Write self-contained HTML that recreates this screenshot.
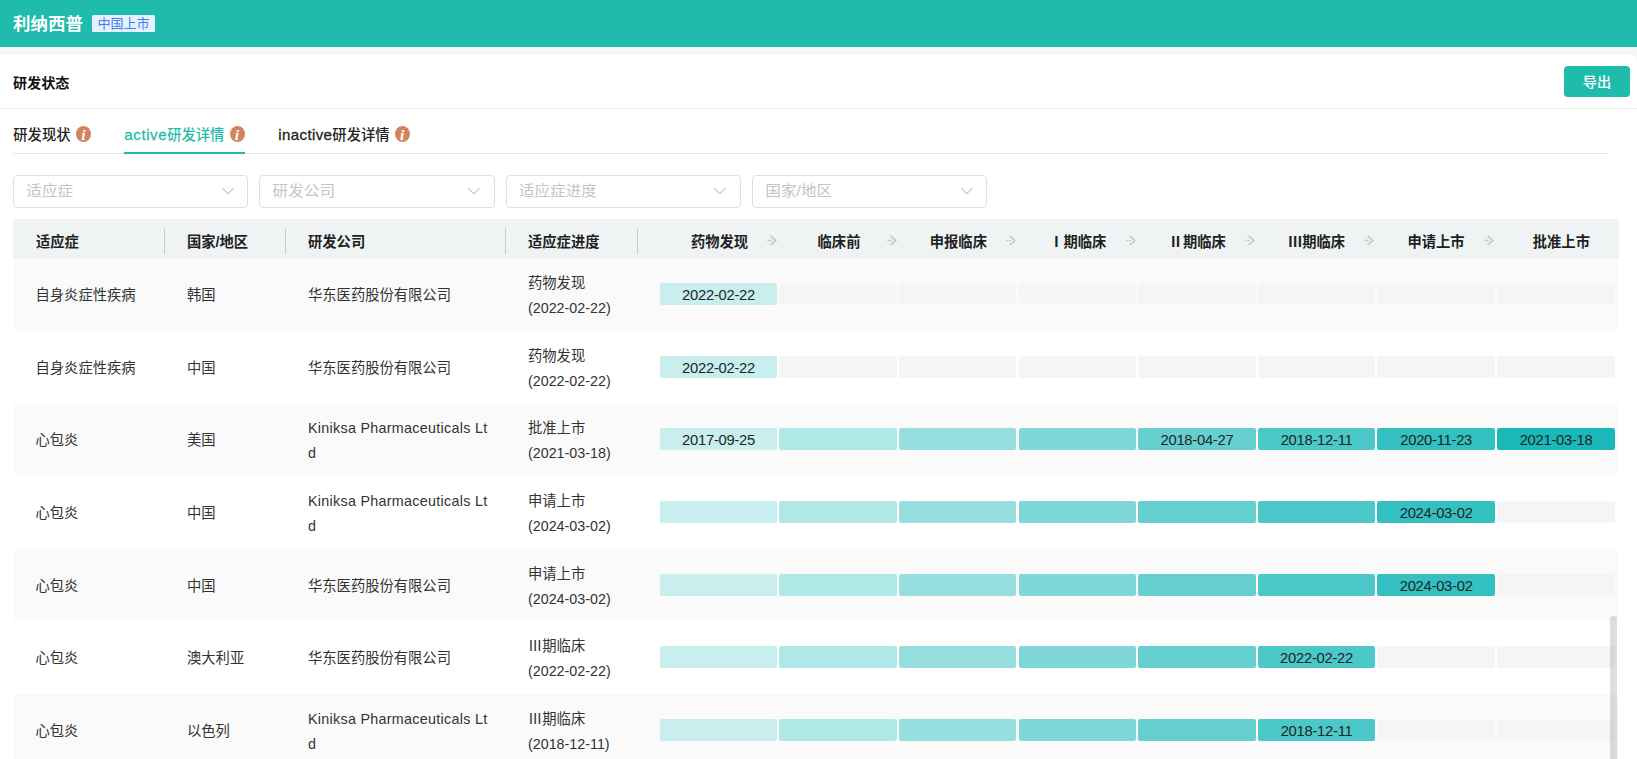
<!DOCTYPE html>
<html lang="zh-CN">
<head>
<meta charset="utf-8">
<title>利纳西普 - 研发状态</title>
<style>
html,body{margin:0;padding:0;}
body{width:1637px;height:759px;overflow:hidden;background:#f6f6f9;position:relative;
  font-family:"Liberation Sans","Noto Sans CJK SC",sans-serif;font-size:14px;color:#303133;}
.topbar{position:absolute;left:0;top:0;width:1637px;height:47px;background:#1fbbac;}
.drug{position:absolute;left:13px;top:10.6px;line-height:26px;font-size:17.5px;font-weight:700;color:#fff;}
.badge{position:absolute;left:92px;top:15px;width:63px;height:17px;line-height:17px;text-align:center;font-size:13px;color:#3d82f6;background:#e8f0fe;border-radius:1.5px;}
.card{position:absolute;left:0;top:55px;width:1637px;height:704px;background:#fff;border-radius:0 8px 0 0;overflow:hidden;}
.sec-title{position:absolute;left:13px;top:17px;line-height:22px;font-size:14.1px;font-weight:700;color:#111;}
.export{position:absolute;left:1564px;top:11px;width:66px;height:31px;line-height:31px;text-align:center;background:#1fbbac;color:#fff;border-radius:4px;font-size:14.2px;font-weight:500;padding-top:.5px;box-sizing:border-box;}
.hr{position:absolute;left:0;top:53px;width:1637px;height:1px;background:#ebebec;}
.tabs{position:absolute;left:0;top:54px;width:1637px;height:46px;}
.tab{position:absolute;top:14.5px;line-height:22px;font-size:14.3px;margin-left:.3px;font-weight:500;color:#222;white-space:nowrap;}
.tab.active{color:#1fbbac;}
.info{position:absolute;top:17px;width:15px;height:16px;border-radius:50%;background:#cf8560;color:#fff;text-align:center;overflow:hidden;}
.info i{display:block;font-family:"Liberation Serif",serif;font-style:italic;font-weight:700;font-size:15.5px;line-height:16px;margin-top:.7px;margin-left:-.2px;}
.tabline{position:absolute;left:13px;top:44px;width:1595px;height:1px;background:#e4e7ed;}
.tabbar{position:absolute;left:124px;top:43px;width:121px;height:2px;background:#1fbbac;}
.filters{position:absolute;left:0;top:120px;width:1637px;height:32px;}
.select{position:absolute;top:0;width:233.4px;height:30.7px;border:1px solid #dcdfe6;border-radius:4px;background:#fff;}
.select span{position:absolute;left:12.6px;top:0;line-height:31.6px;font-size:15.6px;transform:scaleY(.95);transform-origin:0 100%;margin-top:-1.6px;margin-left:-.3px;color:#c0c4cc;}
.chev{position:absolute;right:13px;top:7.7px;width:13.6px;height:13.6px;}
.thead{position:absolute;left:13px;top:164px;width:1606px;height:40px;background:#eff3f3;}
.th{position:absolute;top:0;height:40px;line-height:46px;font-weight:700;font-size:14.3px;color:#1f1f1f;box-sizing:border-box;padding-left:23px;white-space:nowrap;}
.sep{position:absolute;right:0;top:9px;width:1px;height:26px;background:#c2cdcb;}
.sh{position:absolute;top:0;width:117.4px;height:40px;line-height:46px;text-align:center;font-weight:700;font-size:14.3px;color:#1f1f1f;white-space:nowrap;}
.rarr{position:absolute;right:0.8px;top:15.5px;width:10px;height:11px;}
.tbody{position:absolute;left:13px;top:204px;width:1606px;height:500px;}
.tr{position:absolute;left:0;width:1606px;height:72.67px;}
.rowbg{position:absolute;left:0;width:1606px;background:#fafafa;border-radius:5px;}
.td{position:absolute;top:0;height:100%;display:flex;align-items:center;box-sizing:border-box;padding-left:23px;line-height:25.2px;font-size:14.3px;color:#333;padding-top:1px;}
.c1{left:0;width:152px;padding-left:22.5px;}
.c2{left:152px;width:121px;padding-left:22px;}
.c3{left:273px;width:220px;padding-left:22px;}
.c4{left:493px;width:132px;padding-left:22px;}
.bars{position:absolute;left:646.8px;top:24.33px;height:22px;width:960px;}
.bar{position:absolute;top:0;display:block;width:117.5px;height:22px;border-radius:2px;line-height:24.4px;text-align:center;font-style:normal;font-size:14.8px;letter-spacing:-.28px;color:#1d2626;}
.bar:nth-child(1){left:0.00px}
.bar:nth-child(2){left:119.60px}
.bar:nth-child(3){left:239.20px}
.bar:nth-child(4){left:358.80px}
.bar:nth-child(5){left:478.40px}
.bar:nth-child(6){left:598.00px}
.bar:nth-child(7){left:717.60px}
.bar:nth-child(8){left:837.20px}
.bar.off{background:#f5f5f5;}
.s1{background:#c9eeee}
.s2{background:#b0e7e7}
.s3{background:#97dfdf}
.s4{background:#7fd7d8}
.s5{background:#66d0d0}
.s6{background:#4cc8c8}
.s7{background:#33c0c1}
.s8{background:#1ab8b9}
.vscroll{position:absolute;left:1610px;top:561px;width:7px;height:200px;border-radius:3px;background:rgba(144,147,153,.3);}
.lat{letter-spacing:.3px}
.tab .lat{font-size:15px;letter-spacing:.62px;-webkit-text-stroke:.3px currentColor}
.tab .lat.l2{letter-spacing:.4px}
.bar:nth-child(8){width:118.2px}
.th+.th{padding-left:22px}
.td.two{padding-top:2.6px}
.brk{display:block;width:184px;word-break:break-all}
</style>
</head>
<body>
<div class="topbar"><span class="drug">利纳西普</span><span class="badge">中国上市</span></div>
<div class="card">
  <div class="sec-title">研发状态</div>
  <div class="export">导出</div>
  <div class="hr"></div>
  <div class="tabs">
    <div class="tab" style="left:13px">研发现状</div><span class="info" style="left:76.1px"><i>i</i></span>
    <div class="tab active" style="left:124px"><span class="lat">active</span>研发详情</div><span class="info" style="left:229.6px"><i>i</i></span>
    <div class="tab" style="left:278px"><span class="lat l2">inactive</span>研发详情</div><span class="info" style="left:394.8px"><i>i</i></span>
    <div class="tabline"></div><div class="tabbar"></div>
  </div>
  <div class="filters">
    <div class="select" style="left:13.0px"><span>适应症</span><svg class="chev" viewBox="0 0 12 12"><path d="M1 3.6 L6 8.6 L11 3.6" fill="none" stroke="#c3c6ce" stroke-width="1"/></svg></div>
    <div class="select" style="left:259.3px"><span>研发公司</span><svg class="chev" viewBox="0 0 12 12"><path d="M1 3.6 L6 8.6 L11 3.6" fill="none" stroke="#c3c6ce" stroke-width="1"/></svg></div>
    <div class="select" style="left:505.7px"><span>适应症进度</span><svg class="chev" viewBox="0 0 12 12"><path d="M1 3.6 L6 8.6 L11 3.6" fill="none" stroke="#c3c6ce" stroke-width="1"/></svg></div>
    <div class="select" style="left:752.0px"><span>国家/地区</span><svg class="chev" viewBox="0 0 12 12"><path d="M1 3.6 L6 8.6 L11 3.6" fill="none" stroke="#c3c6ce" stroke-width="1"/></svg></div>
  </div>
  <div class="thead">
    <div class="th" style="left:0px;width:152px">适应症<b class="sep"></b></div>
    <div class="th" style="left:152px;width:121px">国家/地区<b class="sep"></b></div>
    <div class="th" style="left:273px;width:220px">研发公司<b class="sep"></b></div>
    <div class="th" style="left:493px;width:132px">适应症进度<b class="sep"></b></div>
    <div class="sh" style="left:647.9px">药物发现<svg class="rarr" viewBox="0 0 10 11"><path d="M0.4 5.5 H2.2 M2.8 5.5 H4.8 M3.6 1 L8.9 5.5 L3.6 10" fill="none" stroke="#bfc3cc" stroke-width="1.6"/></svg></div>
    <div class="sh" style="left:767.3px">临床前<svg class="rarr" viewBox="0 0 10 11"><path d="M0.4 5.5 H2.2 M2.8 5.5 H4.8 M3.6 1 L8.9 5.5 L3.6 10" fill="none" stroke="#bfc3cc" stroke-width="1.6"/></svg></div>
    <div class="sh" style="left:886.7px">申报临床<svg class="rarr" viewBox="0 0 10 11"><path d="M0.4 5.5 H2.2 M2.8 5.5 H4.8 M3.6 1 L8.9 5.5 L3.6 10" fill="none" stroke="#bfc3cc" stroke-width="1.6"/></svg></div>
    <div class="sh" style="left:1006.1px">Ⅰ期临床<svg class="rarr" viewBox="0 0 10 11"><path d="M0.4 5.5 H2.2 M2.8 5.5 H4.8 M3.6 1 L8.9 5.5 L3.6 10" fill="none" stroke="#bfc3cc" stroke-width="1.6"/></svg></div>
    <div class="sh" style="left:1125.5px">Ⅱ期临床<svg class="rarr" viewBox="0 0 10 11"><path d="M0.4 5.5 H2.2 M2.8 5.5 H4.8 M3.6 1 L8.9 5.5 L3.6 10" fill="none" stroke="#bfc3cc" stroke-width="1.6"/></svg></div>
    <div class="sh" style="left:1244.9px">Ⅲ期临床<svg class="rarr" viewBox="0 0 10 11"><path d="M0.4 5.5 H2.2 M2.8 5.5 H4.8 M3.6 1 L8.9 5.5 L3.6 10" fill="none" stroke="#bfc3cc" stroke-width="1.6"/></svg></div>
    <div class="sh" style="left:1364.3px">申请上市<svg class="rarr" viewBox="0 0 10 11"><path d="M0.4 5.5 H2.2 M2.8 5.5 H4.8 M3.6 1 L8.9 5.5 L3.6 10" fill="none" stroke="#bfc3cc" stroke-width="1.6"/></svg></div>
    <div class="sh last" style="left:1489.7px">批准上市</div>
  </div>
  <div class="tbody">
    <div class="rowbg" style="top:0px;height:72px"></div>
    <div class="rowbg" style="top:144px;height:73px"></div>
    <div class="rowbg" style="top:289px;height:73px"></div>
    <div class="rowbg" style="top:435px;height:73px"></div>
    <div class="tr" style="top:-0.33px">
      <div class="td c1"><span>自身炎症性疾病</span></div><div class="td c2"><span>韩国</span></div><div class="td c3"><span>华东医药股份有限公司</span></div><div class="td c4 two"><span>药物发现<br>(2022-02-22)</span></div>
      <div class="bars"><i class="bar s1">2022-02-22</i><i class="bar off"></i><i class="bar off"></i><i class="bar off"></i><i class="bar off"></i><i class="bar off"></i><i class="bar off"></i><i class="bar off"></i></div>
    </div>
    <div class="tr" style="top:72.67px">
      <div class="td c1"><span>自身炎症性疾病</span></div><div class="td c2"><span>中国</span></div><div class="td c3"><span>华东医药股份有限公司</span></div><div class="td c4 two"><span>药物发现<br>(2022-02-22)</span></div>
      <div class="bars"><i class="bar s1">2022-02-22</i><i class="bar off"></i><i class="bar off"></i><i class="bar off"></i><i class="bar off"></i><i class="bar off"></i><i class="bar off"></i><i class="bar off"></i></div>
    </div>
    <div class="tr" style="top:144.67px">
      <div class="td c1"><span>心包炎</span></div><div class="td c2"><span>美国</span></div><div class="td c3 two"><span><span class="lat brk">Kiniksa Pharmaceuticals Ltd</span></span></div><div class="td c4 two"><span>批准上市<br>(2021-03-18)</span></div>
      <div class="bars"><i class="bar s1">2017-09-25</i><i class="bar s2"></i><i class="bar s3"></i><i class="bar s4"></i><i class="bar s5">2018-04-27</i><i class="bar s6">2018-12-11</i><i class="bar s7">2020-11-23</i><i class="bar s8">2021-03-18</i></div>
    </div>
    <div class="tr" style="top:217.67px">
      <div class="td c1"><span>心包炎</span></div><div class="td c2"><span>中国</span></div><div class="td c3 two"><span><span class="lat brk">Kiniksa Pharmaceuticals Ltd</span></span></div><div class="td c4 two"><span>申请上市<br>(2024-03-02)</span></div>
      <div class="bars"><i class="bar s1"></i><i class="bar s2"></i><i class="bar s3"></i><i class="bar s4"></i><i class="bar s5"></i><i class="bar s6"></i><i class="bar s7">2024-03-02</i><i class="bar off"></i></div>
    </div>
    <div class="tr" style="top:290.67px">
      <div class="td c1"><span>心包炎</span></div><div class="td c2"><span>中国</span></div><div class="td c3"><span>华东医药股份有限公司</span></div><div class="td c4 two"><span>申请上市<br>(2024-03-02)</span></div>
      <div class="bars"><i class="bar s1"></i><i class="bar s2"></i><i class="bar s3"></i><i class="bar s4"></i><i class="bar s5"></i><i class="bar s6"></i><i class="bar s7">2024-03-02</i><i class="bar off"></i></div>
    </div>
    <div class="tr" style="top:362.67px">
      <div class="td c1"><span>心包炎</span></div><div class="td c2"><span>澳大利亚</span></div><div class="td c3"><span>华东医药股份有限公司</span></div><div class="td c4 two"><span>Ⅲ期临床<br>(2022-02-22)</span></div>
      <div class="bars"><i class="bar s1"></i><i class="bar s2"></i><i class="bar s3"></i><i class="bar s4"></i><i class="bar s5"></i><i class="bar s6">2022-02-22</i><i class="bar off"></i><i class="bar off"></i></div>
    </div>
    <div class="tr" style="top:435.67px">
      <div class="td c1"><span>心包炎</span></div><div class="td c2"><span>以色列</span></div><div class="td c3 two"><span><span class="lat brk">Kiniksa Pharmaceuticals Ltd</span></span></div><div class="td c4 two"><span>Ⅲ期临床<br>(2018-12-11)</span></div>
      <div class="bars"><i class="bar s1"></i><i class="bar s2"></i><i class="bar s3"></i><i class="bar s4"></i><i class="bar s5"></i><i class="bar s6">2018-12-11</i><i class="bar off"></i><i class="bar off"></i></div>
    </div>
  </div>
  <div class="vscroll"></div>
</div>
</body>
</html>
